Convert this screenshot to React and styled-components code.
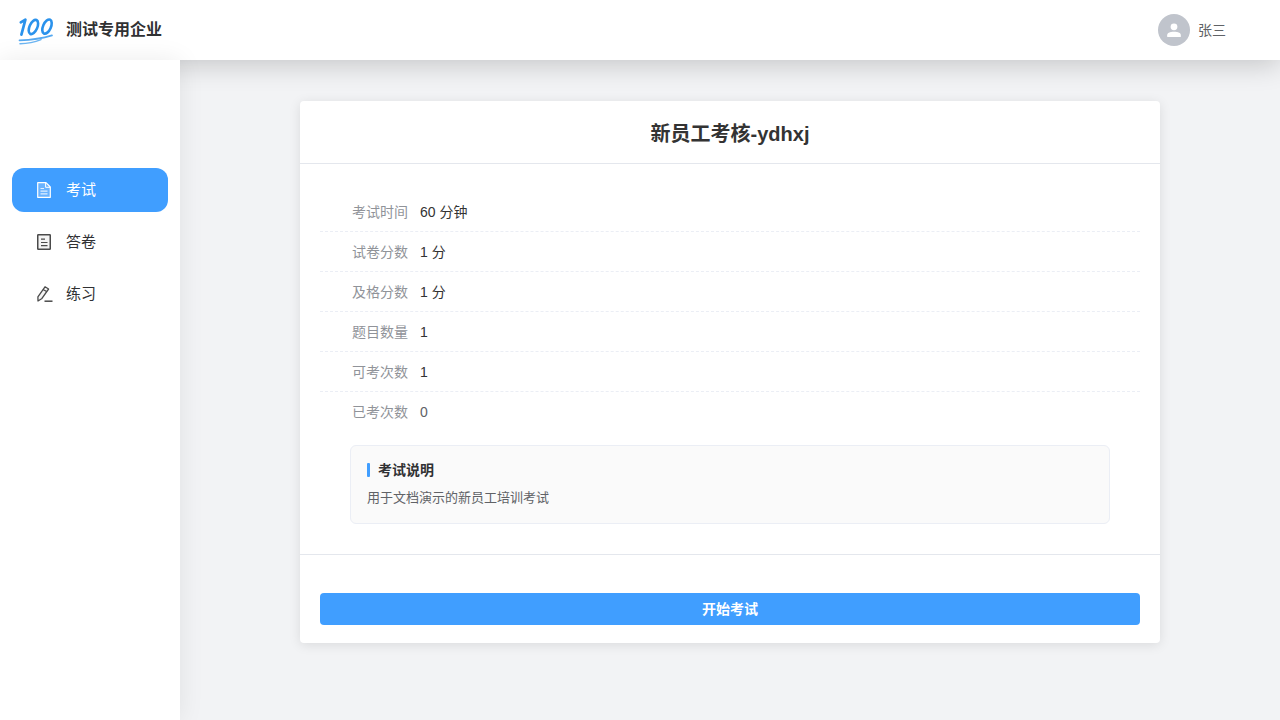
import React from "react";
import styled, { createGlobalStyle } from "styled-components";

const Global = createGlobalStyle`
  html, body { margin: 0; padding: 0; height: 100%; }
  body { font-family: "Liberation Sans", "Noto Sans CJK SC", sans-serif; background: #f2f3f5; color: #303133; }
  #root { height: 100%; }
  * { box-sizing: border-box; }
`;

const Page = styled.div`
  width: 1280px;
  height: 720px;
  overflow: hidden;
  display: flex;
  flex-direction: column;
  background: #f2f3f5;
`;

const Header = styled.header`
  position: relative;
  z-index: 2;
  flex: 0 0 60px;
  height: 60px;
  background: #fff;
  display: flex;
  align-items: center;
  justify-content: space-between;
  padding: 0 54px 0 17px;
  box-shadow: 0 4px 28px rgba(0, 0, 0, 0.2);
`;

const Brand = styled.div`
  display: flex;
  align-items: center;
  gap: 11px;
`;

const BrandName = styled.span`
  font-size: 16px;
  line-height: 20px;
  font-weight: 700;
  color: #303133;
`;

const User = styled.div`
  display: flex;
  align-items: center;
  gap: 8px;
  font-size: 14px;
  line-height: 20px;
  color: #606266;
`;

const Avatar = styled.div`
  width: 32px;
  height: 32px;
  border-radius: 50%;
  background: #c0c4cc;
  display: flex;
  align-items: center;
  justify-content: center;
`;

const Body = styled.div`
  flex: 1;
  display: flex;
  min-height: 0;
`;

const Sidebar = styled.aside`
  position: relative;
  z-index: 3;
  flex: 0 0 180px;
  background: #fff;
  padding: 108px 12px 0;
  display: flex;
  flex-direction: column;
  gap: 8px;
  box-shadow: 0 0 24px rgba(0, 0, 0, 0.08);
`;

const MenuItem = styled.div`
  height: 44px;
  border-radius: 12px;
  display: flex;
  align-items: center;
  gap: 15px;
  padding-left: 25px;
  font-size: 15px;
  line-height: 20px;
  background: ${(p) => (p.$active ? "#409eff" : "transparent")};
  color: ${(p) => (p.$active ? "#fff" : "#303133")};
`;

const MenuIcon = styled.span`
  flex: 0 0 14px;
  width: 14px;
  height: 16px;
  display: flex;
  svg {
    flex: none;
    overflow: visible;
  }
`;

const Main = styled.main`
  flex: 1;
  display: flex;
  justify-content: center;
  align-items: flex-start;
  padding-top: 41px;
`;

const Card = styled.section`
  width: 860px;
  background: #fff;
  border-radius: 4px;
  box-shadow: 0 2px 12px rgba(0, 0, 0, 0.1);
`;

const CardTitle = styled.h1`
  margin: 0;
  height: 63px;
  display: flex;
  align-items: center;
  justify-content: center;
  font-size: 20px;
  font-weight: 700;
  color: #333;
  border-bottom: 1px solid #e4e7ed;
`;

const Info = styled.div`
  padding: 28px 20px 0;
`;

const Row = styled.div`
  height: 40px;
  display: flex;
  align-items: center;
  font-size: 14px;
  line-height: 20px;
  border-bottom: 1px dashed ${(p) => (p.$last ? "transparent" : "#ebeef5")};
`;

const Label = styled.span`
  width: 88px;
  text-align: right;
  color: #909399;
  margin-right: 12px;
`;

const Value = styled.span`
  color: ${(p) => (p.$muted ? "#606266" : "#333")};
`;

const Notice = styled.div`
  margin: 13px 30px 0;
  height: 79px;
  padding: 14px 16px;
  background: #fafafa;
  border: 1px solid #ebeef5;
  border-radius: 6px;
`;

const NoticeTitle = styled.div`
  display: flex;
  align-items: center;
  height: 20px;
  font-size: 14px;
  line-height: 20px;
  font-weight: 700;
  color: #303133;
  &::before {
    content: "";
    width: 3px;
    height: 14px;
    background: #409eff;
    border-radius: 1px;
    margin-right: 8px;
  }
`;

const NoticeText = styled.div`
  margin-top: 8px;
  font-size: 13px;
  line-height: 20px;
  color: #606266;
`;

const Footer = styled.div`
  margin-top: 30px;
  border-top: 1px solid #e4e7ed;
  padding: 38px 20px 18px;
`;

const StartButton = styled.button`
  display: block;
  width: 100%;
  height: 32px;
  padding: 0;
  border: 0;
  border-radius: 4px;
  background: #409eff;
  color: #fff;
  font-family: inherit;
  font-size: 14px;
  line-height: 20px;
  font-weight: 700;
`;

const Logo = () => (
  <svg width="38" height="30" viewBox="0 0 38 30" fill="none" aria-hidden="true">
    <g stroke="#2a92ec" strokeLinecap="round">
      <path d="M3.8 7.4 L8.4 4.6 L4.4 19.6" strokeWidth="2.7" strokeLinejoin="round" />
      <ellipse cx="16.4" cy="12" rx="3.9" ry="7.6" transform="rotate(24 16.4 12)" strokeWidth="2.6" />
      <ellipse cx="30" cy="11.6" rx="3.9" ry="7.6" transform="rotate(24 30 11.6)" strokeWidth="2.6" />
      <path d="M2.5 25.4 C13 25 25 23.5 35 20.4" stroke="#56a9f0" strokeWidth="1.7" />
      <path d="M3 28.8 C10 28.6 18 27 24 24.6" stroke="#6cb5f2" strokeWidth="1.5" />
    </g>
  </svg>
);

const PersonIcon = () => (
  <svg width="16" height="16" viewBox="0 0 16 16" fill="#fff" aria-hidden="true">
    <circle cx="8" cy="4.8" r="3.4" />
    <path d="M1.2 15 V13.2 C1.2 11 3.6 9.8 8 9.8 S14.8 11 14.8 13.2 V15 Z" />
  </svg>
);

const ExamIcon = () => (
  <svg width="14" height="16" viewBox="0 0 14 16" fill="none" stroke="currentColor" aria-hidden="true">
    <path d="M.7.7 H9 L13.3 5 V15.3 H.7 Z" fill="rgba(255,255,255,.22)" strokeWidth="1.2" strokeLinejoin="round" />
    <path d="M8.6 1 V5.3 H13" strokeWidth="1" />
    <path d="M3.5 6.5 H7 M3.5 9.2 H10.5 M3.5 11.9 H10.5" strokeWidth="1.2" opacity=".8" />
  </svg>
);

const PaperIcon = () => (
  <svg width="14" height="16" viewBox="0 0 14 16" fill="none" stroke="#4a4a4a" aria-hidden="true">
    <rect x=".75" y=".75" width="12.5" height="14.5" rx=".6" fill="#f4f4f4" strokeWidth="1.5" />
    <path d="M4 5.2 H8 M4 8.5 H10.5 M4 11.6 H10.5" strokeWidth="1.2" />
  </svg>
);

const PencilIcon = () => (
  <svg width="16" height="16" viewBox="0 0 16 16" fill="none" stroke="#4a4a4a" aria-hidden="true">
    <path d="M8 .8 L11.6 3 L4.6 12.8 L1 15 L.9 10.8 Z" fill="#f4f4f4" strokeWidth="1.3" strokeLinejoin="round" />
    <path d="M6 3.4 L9.6 5.6" strokeWidth="1.2" />
    <path d="M7.5 15.2 H15.5" strokeWidth="1.5" />
  </svg>
);

const rows = [
  ["考试时间", "60 分钟"],
  ["试卷分数", "1 分"],
  ["及格分数", "1 分"],
  ["题目数量", "1"],
  ["可考次数", "1"],
  ["已考次数", "0"],
];

export default function App() {
  return (
    <Page>
      <Global />
      <Header>
        <Brand>
          <Logo />
          <BrandName>测试专用企业</BrandName>
        </Brand>
        <User>
          <Avatar>
            <PersonIcon />
          </Avatar>
          张三
        </User>
      </Header>
      <Body>
        <Sidebar>
          <MenuItem $active>
            <MenuIcon><ExamIcon /></MenuIcon>
            考试
          </MenuItem>
          <MenuItem>
            <MenuIcon><PaperIcon /></MenuIcon>
            答卷
          </MenuItem>
          <MenuItem>
            <MenuIcon><PencilIcon /></MenuIcon>
            练习
          </MenuItem>
        </Sidebar>
        <Main>
          <Card>
            <CardTitle>新员工考核-ydhxj</CardTitle>
            <Info>
              {rows.map(([k, v], i) => (
                <Row key={k} $last={i === rows.length - 1}>
                  <Label>{k}</Label>
                  <Value $muted={i === rows.length - 1}>{v}</Value>
                </Row>
              ))}
              <Notice>
                <NoticeTitle>考试说明</NoticeTitle>
                <NoticeText>用于文档演示的新员工培训考试</NoticeText>
              </Notice>
            </Info>
            <Footer>
              <StartButton>开始考试</StartButton>
            </Footer>
          </Card>
        </Main>
      </Body>
    </Page>
  );
}
